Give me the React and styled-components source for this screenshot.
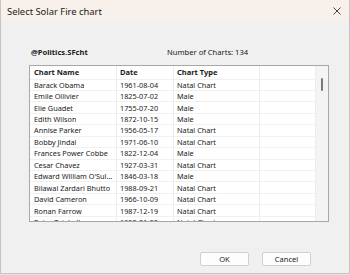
import React from 'react';
import styled, { createGlobalStyle } from 'styled-components';

const GlobalStyle = createGlobalStyle`
  html, body {
    margin: 0;
    padding: 0;
    background: #e4e4e4;
  }
  * {
    box-sizing: border-box;
  }
`;

const Window = styled.div`
  width: 350px;
  height: 274px;
  display: flex;
  flex-direction: column;
  background-color: #f0f0f0;
  border: 1px solid #c4c4c4;
  border-top: none;
  font-family: 'Noto Sans', 'Open Sans', sans-serif;
  color: #1a1a1a;
  overflow: hidden;
`;

const TitleBar = styled.header`
  display: flex;
  align-items: center;
  justify-content: space-between;
  height: 22px;
  padding: 0px 5px 0px 6px;
  background-color: #f8f0eb;
  font-size: 9.4px;
`;

const CloseButton = styled.button`
  display: flex;
  align-items: center;
  justify-content: center;
  width: 14px;
  height: 14px;
  padding: 0;
  border: none;
  background: none;
`;

const Content = styled.main`
  flex: 1;
  display: flex;
  flex-direction: column;
  padding: 24px 22px 0px 28px;
`;

const InfoRow = styled.div`
  display: flex;
  align-items: center;
  height: 12px;
  padding: 0px 0px 0px 2px;
  font-size: 7.6px;

  strong {
    width: 136px;
    font-weight: 700;
  }
`;

const ListFrame = styled.section`
  display: flex;
  width: 300px;
  height: 157px;
  margin: 7px 0px 0px 0px;
  background-color: #ffffff;
  border: 1px solid #a8a8a8;
`;

const ListBody = styled.div`
  flex: 1;
  overflow: hidden;
`;

const Row = styled.div`
  display: grid;
  grid-template-columns: 87px 57px 86px 1fr;
  height: ${(p) => (p.$header ? '13.5px' : '11.45px')};
  font-size: ${(p) => (p.$header ? '7.5px' : '7.3px')};
  font-weight: ${(p) => (p.$header ? 700 : 400)};
  border-bottom: 1px solid #f0f0f0;
`;

const Cell = styled.div`
  display: flex;
  align-items: center;
  padding: 0px 3px 0px ${(p) => (p.$first ? '4px' : '3px')};
  border-right: 1px solid #ececec;
  white-space: nowrap;
  overflow: hidden;

  span {
    overflow: hidden;
    text-overflow: ellipsis;
  }
`;

const ScrollTrack = styled.div`
  width: 12px;
  padding: 12px 0px 0px 5px;
  background-color: #f4f4f4;
`;

const ScrollThumb = styled.div`
  width: 2px;
  height: 13px;
  border-radius: 1px;
  background-color: #7a7a7a;
`;

const ButtonRow = styled.footer`
  display: flex;
  justify-content: flex-end;
  gap: 13px;
  margin: auto 16px 7px 0px;
`;

const DialogButton = styled.button`
  width: 49px;
  height: 14px;
  padding: 0;
  font-family: inherit;
  font-size: 7.5px;
  color: #1a1a1a;
  background-color: #fdfdfd;
  border: 1px solid #d0d0d0;
  border-radius: 2px;
`;

const charts = [
  ['Barack Obama', '1961-08-04', 'Natal Chart'],
  ['Emile Ollivier', '1825-07-02', 'Male'],
  ['Elie Guadet', '1755-07-20', 'Male'],
  ['Edith Wilson', '1872-10-15', 'Male'],
  ['Annise Parker', '1956-05-17', 'Natal Chart'],
  ['Bobby Jindal', '1971-06-10', 'Natal Chart'],
  ['Frances Power Cobbe', '1822-12-04', 'Male'],
  ['Cesar Chavez', '1927-03-31', 'Natal Chart'],
  ["Edward William O'Sullivan", '1846-03-18', 'Male'],
  ['Bilawal Zardari Bhutto', '1988-09-21', 'Natal Chart'],
  ['David Cameron', '1966-10-09', 'Natal Chart'],
  ['Ronan Farrow', '1987-12-19', 'Natal Chart'],
  ['Peter Tatchell', '1952-01-25', 'Natal Chart'],
];

const App = () => {
  return (
    <>
      <GlobalStyle />
      <Window>
        <TitleBar>
          <span>Select Solar Fire chart</span>
          <CloseButton aria-label="Close">
            <svg width="8" height="8" viewBox="0 0 8 8">
              <path d="M0.5 0.5 L7.5 7.5 M7.5 0.5 L0.5 7.5" stroke="#333" strokeWidth="0.9" />
            </svg>
          </CloseButton>
        </TitleBar>
        <Content>
          <InfoRow>
            <strong>@Politics.SFcht</strong>
            <span>Number of Charts: 134</span>
          </InfoRow>
          <ListFrame>
            <ListBody>
              <Row $header>
                <Cell $first>Chart Name</Cell>
                <Cell>Date</Cell>
                <Cell>Chart Type</Cell>
                <Cell />
              </Row>
              {charts.map(([name, date, type]) => (
                <Row key={name}>
                  <Cell $first>
                    <span>{name}</span>
                  </Cell>
                  <Cell>{date}</Cell>
                  <Cell>{type}</Cell>
                  <Cell />
                </Row>
              ))}
            </ListBody>
            <ScrollTrack>
              <ScrollThumb />
            </ScrollTrack>
          </ListFrame>
          <ButtonRow>
            <DialogButton>OK</DialogButton>
            <DialogButton>Cancel</DialogButton>
          </ButtonRow>
        </Content>
      </Window>
    </>
  );
};

export default App;
